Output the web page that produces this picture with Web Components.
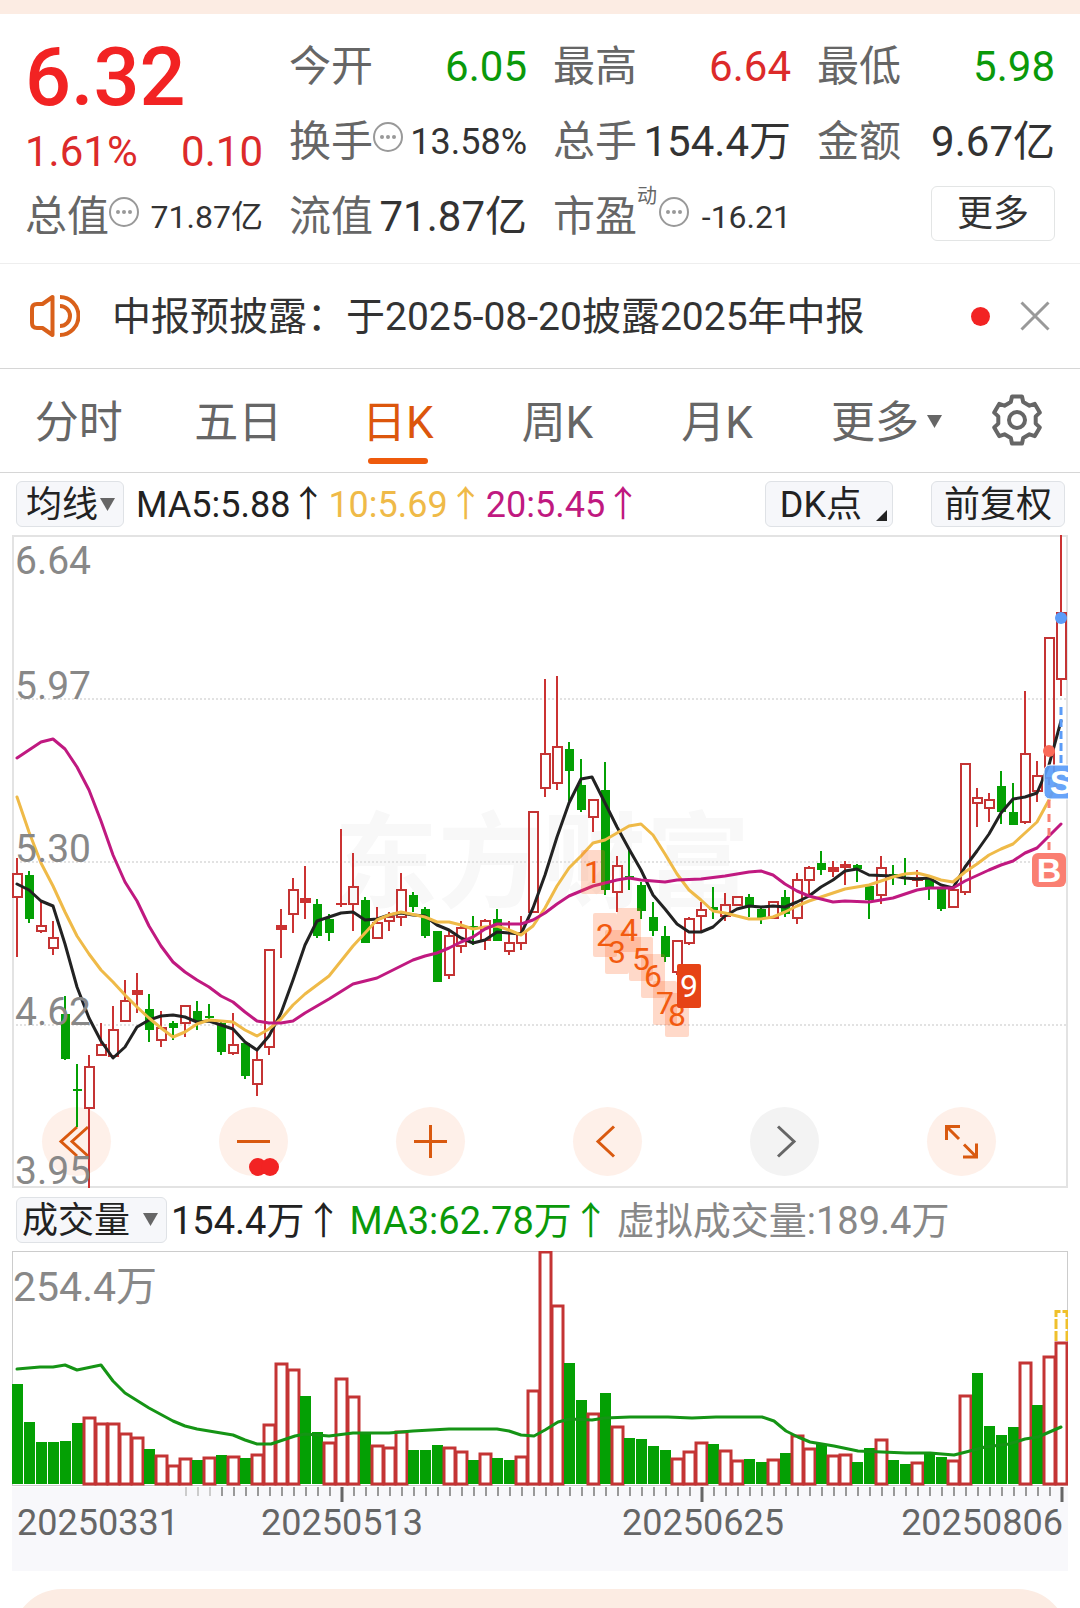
<!DOCTYPE html>
<html lang="zh-CN">
<head>
<meta charset="utf-8">
<meta name="viewport" content="width=device-width, initial-scale=1">
<title>日K</title>
<style>
	body {
		margin: 0;
		min-height: 100vh;
		display: flex;
		flex-direction: column;
		background: #fff;
		color: #333;
		font-family: Roboto, "Noto Sans CJK SC", sans-serif;
	}
</style>
</head>
<body>
<stock-app></stock-app>

<script>
'use strict';

function define(name, html, setup) {
	let template = document.createElement('template');
	template.innerHTML = html;

	customElements.define(name, class extends HTMLElement {
		constructor() {
			super();
			this.attachShadow({ mode: 'open' })
				.appendChild(template.content.cloneNode(true));
		}

		connectedCallback() {
			if(setup)
				setup(this, this.shadowRoot);
		}
	});
}

// one entry per trading day: colour, high, body top, body bottom, low
const CANDLES = `
r 858 873 898 957|g 871 875 919 923|r 902 925 932 933|r 921 937 949 955|g 996 1014 1059 1060
g 1064 1089 1091 1127|r 1055 1066 1109 1188|r 1023 1044 1056 1056|r 1006 1029 1057 1059|r 980 1000 1022 1022
r 973 990 995 1013|g 994 1009 1030 1042|r 1011 1027 1041 1047|g 1021 1023 1028 1040|r 1005 1005 1024 1037
g 1001 1011 1021 1030|g 1004 1016 1018 1022|g 1021 1023 1052 1055|r 1013 1044 1054 1055|g 1041 1043 1076 1079
r 1050 1059 1085 1096|r 949 949 1048 1055|r 909 925 930 958|r 878 889 915 933|r 866 898 903 919
g 899 904 936 938|g 914 919 933 941|r 829 903 905 907|r 853 886 905 931|g 897 900 943 943
r 907 922 939 939|r 912 916 922 931|r 873 889 918 926|g 892 895 907 912|g 907 909 936 938
g 931 931 982 982|r 931 935 976 979|r 921 927 947 953|g 916 926 928 945|r 919 920 941 950
g 909 919 941 941|r 921 942 952 955|r 916 932 944 950|r 811 811 913 913|r 679 753 789 797
r 676 746 784 790|g 742 749 771 801|g 759 785 810 812|r 799 799 818 832|g 762 790 890 895
r 856 865 893 912|g 848 876 878 890|g 882 885 911 919|g 902 917 931 936|g 926 936 957 962
r 940 940 973 975|r 917 918 944 945|r 902 909 917 932|g 887 907 910 919|r 893 904 917 921
r 896 896 906 906|g 894 897 907 917|g 908 909 918 924|r 901 901 919 919|g 890 897 914 917
r 873 879 919 924|r 866 867 881 894|g 851 863 870 875|r 861 867 872 877|r 861 864 868 885
g 864 865 869 882|g 886 886 900 919|r 856 867 896 904|g 865 874 876 885|g 858 877 879 885
r 870 877 881 887|g 879 879 889 900|g 889 889 909 911|r 889 889 908 908|r 763 763 893 895
r 788 797 804 827|r 793 799 809 822|g 771 786 812 824|g 783 812 825 825|r 691 753 823 824
r 761 775 792 802|r 637 637 779 785|r 535 612 680 696`
	.trim().split(/[|\n]/).map(row => {
		let [colour, ...v] = row.split(' ');
		return [colour, ...v.map(Number)];
	});

const VOLUMES = [
	1384, 1422, 1442, 1442, 1441, 1423, 1417, 1423, 1423, 1433, 1437, 1449, 1455, 1465, 1458, 1460,
	1457, 1455, 1456, 1458, 1454, 1424, 1363, 1369, 1396, 1432, 1442, 1378, 1396, 1432, 1445, 1447,
	1431, 1450, 1450, 1445, 1447, 1451, 1460, 1453, 1458, 1460, 1456, 1390, 1251, 1305, 1363, 1400,
	1413, 1393, 1426, 1438, 1439, 1446, 1450, 1458, 1451, 1442, 1444, 1450, 1460, 1459, 1462, 1459,
	1453, 1435, 1448, 1444, 1455, 1454, 1462, 1448, 1439, 1460, 1464, 1462, 1453, 1457, 1460, 1395,
	1373, 1426, 1435, 1427, 1362, 1405, 1356, 1342
];
const VOLUME_COLOURS = 'ggggggrrrrrgrrrgrgrgrrrrggrrrgrrrgggrrgrggrrrrggrgrggggrrrgrrggrgrrgrrggrggrggrrggggrgrr';

const MA5 = '17,884 29,890 41,901 53,906 65,944 77,987 89,1018 101,1041 113,1058 125,1047 137,1027 149,1020 161,1016 173,1015 185,1017 197,1022 209,1021 221,1025 233,1029 245,1042 257,1050 269,1036 281,1013 293,980 305,945 317,921 329,917 341,913 353,912 365,920 377,919 389,915 401,913 413,915 425,916 437,925 449,930 461,938 473,943 485,940 497,932 509,933 521,934 533,908 545,875 557,837 569,803 581,779 592,777 605,803 617,827 629,849 641,870 653,895 665,909 677,924 689,932 701,932 713,927 725,916 737,909 749,906 761,907 773,906 785,907 797,902 809,896 821,887 833,880 845,871 857,869 869,875 893,876 905,878 917,879 929,878 941,885 953,888 965,867 977,851 989,834 1001,813 1013,799 1025,797 1037,793 1049,765 1061,721';
const MA10 = '17,797 29,832 41,863 53,886 65,912 77,936 89,954 101,970 113,982 125,995 137,1007 149,1018 161,1028 173,1037 185,1032 197,1024 209,1020 233,1022 245,1030 257,1036 269,1029 281,1019 293,1005 305,994 329,976 353,946 377,920 389,915 401,912 425,917 437,922 449,922 461,925 473,929 485,927 497,926 509,930 521,935 533,926 545,908 557,886 569,868 581,856 593,843 605,840 617,833 629,826 641,824 653,835 665,854 677,874 689,890 701,900 713,911 725,913 737,916 749,919 761,919 773,917 785,912 797,906 809,901 833,893 845,889 857,887 869,885 881,881 893,877 905,874 917,873 929,876 941,880 953,882 965,872 977,864 989,855 1001,849 1013,844 1025,833 1037,822 1049,800 1061,772';
const MA20 = '17,758 41,742 53,739 65,749 77,767 89,790 101,821 113,855 125,882 137,901 149,926 161,946 173,962 185,972 197,980 209,987 221,996 233,1002 245,1012 257,1021 269,1023 281,1023 293,1021 305,1013 329,999 353,984 377,978 401,966 413,960 425,956 437,953 449,948 461,942 473,937 485,929 497,924 521,924 533,920 545,913 557,904 569,896 581,891 593,886 617,880 629,878 641,880 665,882 677,880 701,879 725,876 749,872 761,871 773,875 785,884 797,891 809,896 833,902 845,901 869,902 893,898 917,890 929,888 953,888 965,881 989,870 1001,865 1013,861 1025,853 1037,848 1049,836 1061,824';
const VOLUME_MA = '17,1369 40,1367 53,1367 65,1365 77,1370 101,1365 113,1381 125,1393 149,1408 173,1421 185,1426 197,1429 233,1435 245,1440 257,1444 271,1444 295,1436 305,1434 329,1436 353,1433 389,1433 413,1431 449,1429 497,1429 509,1431 521,1435 534,1436 545,1430 558,1422 570,1419 592,1420 605,1418 630,1417 668,1417 692,1418 716,1417 762,1417 774,1421 786,1431 798,1437 810,1442 834,1446 858,1451 882,1452 906,1453 930,1453 954,1455 966,1452 985,1447 1009,1444 1025,1439 1038,1437 1061,1427';

// nine-turn counter: day index, top of the mark
const COUNTS = [[48, 850], [49, 913], [50, 930], [51, 908], [52, 937], [53, 954], [54, 981], [55, 993], [56, 964]];

function candle([colour, high, top, bottom, low], i) {
	let x = 12 + i * 12;
	let height = bottom - top;
	if(colour == 'g')
		return `<path class="g" d="M${x + 4} ${high}h2V${low}h-2zM${x + 1} ${top}h9v${height}h-9z"/>`;
	if(height <= 5)
		return `<path class="r" d="M${x + 4} ${high}h2V${low}h-2zM${x} ${top}h11v${height}h-11z"/>`;
	return `<path class="r" d="M${x + 4} ${high}h2V${top}h-2zM${x + 4} ${bottom}h2V${low}h-2z"/>
		<rect class="hollow" x="${x + 1}" y="${top + 1}" width="9" height="${height - 2}"/>`;
}

function volume(top, i) {
	let x = 12 + i * 12;
	return VOLUME_COLOURS[i] == 'g'
		? `<rect class="g" x="${x}" y="${top}" width="11" height="${1484 - top}"/>`
		: `<rect class="hollow" x="${x}" y="${top + 1}" width="11" height="${1483 - top}"/>`;
}

function gear() {
	let points = [];
	for(let a = 0; a < 360; a += 60)
		for(let [r, d] of [[19, -19], [24, -12], [24, 12], [19, 19]]) {
			let t = (a + d) * Math.PI / 180;
			points.push((26 + r * Math.sin(t)).toFixed(1) + ',' + (26 - r * Math.cos(t)).toFixed(1));
		}
	return points.join(' ');
}

define('more-dots', `
	<style>
		:host { display: block; flex: none; width: 30px; height: 30px; padding-bottom: 10px; }
		svg { display: block; }
	</style>
	<svg width="30" height="30" viewBox="0 0 30 30" fill="#999">
		<circle cx="15" cy="15" r="14" fill="none" stroke="#999" stroke-width="2"/>
		<circle cx="9" cy="15" r="2"/><circle cx="15" cy="15" r="2"/><circle cx="21" cy="15" r="2"/>
	</svg>
`);

define('quote-cell', `
	<style>
		:host { display: flex; align-items: center; font-size: 42px; line-height: 52px; white-space: nowrap; }
		.label { color: #666; }
		.value { margin-left: auto; }
		sup { font-size: 20px; line-height: 24px; align-self: flex-start; margin-right: 2px; padding-top: 5px; color: #666; }
		:host([size=medium]) .value { font-size: 36px; }
		:host([size=small]) .value { font-size: 32px; }
		:host([trend=up]) .value { color: #dc2a2a; }
		:host([trend=down]) .value { color: #0a990a; }
	</style>
	<span class="label"></span><sup></sup><more-dots></more-dots>
	<span class="value"><slot></slot></span>
`, (el, root) => {
	root.querySelector('.label').textContent = el.getAttribute('label');
	if(!el.hasAttribute('info'))
		root.querySelector('more-dots').remove();
	if(el.hasAttribute('note'))
		root.querySelector('sup').textContent = el.getAttribute('note');
	else
		root.querySelector('sup').remove();
});

define('quote-panel', `
	<style>
		:host {
			display: grid;
			grid-template-columns: repeat(4, 1fr);
			grid-auto-rows: 75px;
			column-gap: 26px;
			padding: 15px 25px 9px;
			border-top: 14px solid #fcece3;
			border-bottom: 1px solid #eee;
		}
		.price { grid-row: span 2; }
		.price strong { display: block; font-size: 81px; line-height: 98px; font-weight: 500; color: #f22323; }
		.price div { display: flex; justify-content: space-between; font-size: 42px; line-height: 50px; color: #dc2a2a; }
		button {
			justify-self: end;
			align-self: center;
			width: 124px;
			height: 55px;
			margin-bottom: 6px;
			padding: 0;
			border: 1px solid #e3e5e5;
			border-radius: 6px;
			background: #fff;
			color: #333;
			font: inherit;
			font-size: 36px;
			line-height: 52px;
		}
	</style>
	<div class="price">
		<strong>6.32</strong>
		<div><span>1.61%</span><span>0.10</span></div>
	</div>
	<quote-cell label="今开" trend="down">6.05</quote-cell>
	<quote-cell label="最高" trend="up">6.64</quote-cell>
	<quote-cell label="最低" trend="down">5.98</quote-cell>
	<quote-cell label="换手" size="medium" info>13.58%</quote-cell>
	<quote-cell label="总手">154.4万</quote-cell>
	<quote-cell label="金额">9.67亿</quote-cell>
	<quote-cell label="总值" size="small" info>71.87亿</quote-cell>
	<quote-cell label="流值">71.87亿</quote-cell>
	<quote-cell label="市盈" note="动" size="small" info>-16.21</quote-cell>
	<button type="button">更多</button>
`);

define('notice-bar', `
	<style>
		:host {
			display: flex;
			align-items: center;
			min-height: 104px;
			padding: 0 30px;
			border-bottom: 1px solid #d6d6d6;
			font-size: 39px;
			line-height: 52px;
		}
		svg { display: block; flex: none; }
		a { flex: 1; margin-left: 32px; padding-top: 2px; color: #333; text-decoration: none; white-space: nowrap; }
		.dot { width: 19px; height: 19px; margin-right: 30px; border-radius: 50%; background: #f22323; }
		button { padding: 0; border: 0; background: none; }
	</style>
	<svg width="50" height="44" viewBox="0 0 50 44" fill="none" stroke="#d9601a" stroke-width="4">
		<path d="M22.5 3v38L12.500 34H7q-5 0-5-5V15Q2 10 7 10h5.500z" stroke-linejoin="round"/>
		<path d="M30 12a10 10 0 0 1 0 20M30 3a18.500 19 0 0 1 0 38"/>
	</svg>
	<a href="#notice"><slot></slot></a>
	<span class="dot"></span>
	<button type="button" aria-label="关闭">
		<svg width="30" height="30" viewBox="0 0 30 30" stroke="#999" stroke-width="3"><path d="M1.500 1.500l27 27M28.500 1.500l-27 27"/></svg>
	</button>
`);

define('period-tabs', `
	<style>
		:host {
			display: grid;
			grid-template-columns: repeat(6, 4fr) 3fr;
			height: 103px;
			padding-right: 3px;
			border-bottom: 1px solid #d6d6d6;
		}
		button {
			display: flex;
			flex-direction: column;
			align-items: center;
			padding: 28px 2px 0 0;
			border: 0;
			background: none;
			color: #666;
			font: inherit;
			font-size: 44px;
			line-height: 52px;
			white-space: nowrap;
		}
		button[aria-selected=true] { color: #dc560c; }
		button[aria-selected=true]::after {
			content: '';
			width: 60px;
			height: 6px;
			margin-top: 9px;
			border-radius: 3px;
			background: #ee5a0c;
		}
		.more { flex-direction: row; align-items: flex-start; justify-content: center; gap: 8px; padding-left: 20px; }
		.more svg { padding-top: 18px; }
		.set { padding: 25px 0 0; }
	</style>
	<button type="button" role="tab">分时</button>
	<button type="button" role="tab">五日</button>
	<button type="button" role="tab" aria-selected="true">日K</button>
	<button type="button" role="tab">周K</button>
	<button type="button" role="tab">月K</button>
	<button type="button" class="more" aria-haspopup="menu">更多<svg width="15" height="13" viewBox="0 0 15 13"><path d="M0 0h15L7.500 13z" fill="#666"/></svg></button>
	<button type="button" class="set" aria-label="设置">
		<svg width="52" height="52" viewBox="0 0 52 52" fill="none" stroke="#666" stroke-width="4">
			<polygon points="${gear()}" stroke-linejoin="round"/>
			<circle cx="26" cy="26" r="8"/>
		</svg>
	</button>
`);

define('chip-select', `
	<style>
		:host { display: inline-grid; align-items: center; }
		select, svg { grid-area: 1 / 1; }
		select {
			appearance: none;
			box-sizing: border-box;
			height: 46px;
			padding: 2px var(--chip-end, 24px) 0 var(--chip-start, 9px);
			border: 1px solid #dfe2e6;
			border-radius: 6px;
			background: #f6f7fa;
			color: #222;
			font: inherit;
			font-size: 36px;
			line-height: 42px;
		}
		svg { justify-self: end; margin-right: 9px; pointer-events: none; }
	</style>
	<select><option></option></select>
	<svg width="15" height="13" viewBox="0 0 15 13"><path d="M0 0h15L7.500 13z" fill="#666"/></svg>
`, (el, root) => {
	root.querySelector('select').setAttribute('aria-label', el.getAttribute('value'));
	root.querySelector('option').textContent = el.getAttribute('value');
});

define('chip-button', `
	<style>
		:host { display: block; }
		button {
			display: flex;
			align-items: flex-end;
			gap: 14px;
			height: 46px;
			padding: 2px 5px 0 14px;
			border: 1px solid #dfe2e6;
			border-radius: 6px;
			background: #f6f7fa;
			color: #222;
			font: inherit;
			font-size: 36px;
			line-height: 42px;
			white-space: nowrap;
		}
		svg { display: none; margin-bottom: 5px; }
		:host([corner]) svg { display: block; }
		:host(:not([corner])) button { padding: 2px 12px 0; }
	</style>
	<button type="button"><slot></slot><svg width="11" height="11" viewBox="0 0 11 11"><path d="M11 0v11H0z" fill="#222"/></svg></button>
`);

define('indicator-bar', `
	<style>
		:host { display: flex; align-items: center; min-height: 62px; padding: 0 15px 0 16px; white-space: nowrap; }
		.values { display: flex; flex: 1; font-size: 36px; line-height: 48px; gap: 2px; margin-left: 12px; padding-top: 2px; }
		:host([volume]) { min-height: 63px; }
		:host([volume]) .values { font-size: 38px; gap: 7px; margin-left: 4px; }
	</style>
	<slot name="menu"></slot>
	<div class="values"><slot></slot></div>
	<slot name="actions"></slot>
`);

define('round-button', `
	<style>
		:host { display: block; }
		button { display: block; width: 69px; height: 69px; padding: 0; border: 0; border-radius: 50%; background: #fef0e9; }
		svg { display: block; fill: none; stroke: #d9590f; stroke-width: 3; }
		:host([disabled]) button { background: #f3f3f3; }
		:host([disabled]) svg { stroke: #666; }
	</style>
	<button type="button"><svg width="69" height="69" viewBox="0 0 69 69"><path/></svg></button>
`, (el, root) => {
	const shapes = {
		first: 'M35 20L19 34.500L35 49M46 20L30 34.500L46 49',
		minus: 'M18 34.500h33',
		plus: 'M18 34.500h33M34.500 18v33',
		prev: 'M41 19.500L25 34.500L41 49.500',
		next: 'M28 19.500L44 34.500L28 49.500',
		expand: 'M19.500 33V19.500H33M19.500 19.500L32 32M36 50H49.500V36.500M49.500 50L37 37.500'
	};
	root.querySelector('path').setAttribute('d', shapes[el.getAttribute('icon')]);
	root.querySelector('button').setAttribute('aria-label', el.getAttribute('icon'));
});

const CHART_STYLE = `
	svg { display: block; width: 100%; height: auto; }
	text { font-family: Roboto, "Noto Sans CJK SC", sans-serif; }
	.r { fill: #cb3232; }
	.g { fill: #04a004; }
	.hollow { fill: #fff; stroke: #c43434; stroke-width: 2; }
	polyline { fill: none; stroke-width: 3; stroke-linejoin: round; stroke-linecap: round; }
`;

define('k-chart', `
	<style>
		${CHART_STYLE}
		:host { display: block; position: relative; margin: 0 12px; }
		.plot { position: relative; z-index: 1; overflow: visible; pointer-events: none; }
		.hollow { fill: none; }
		.grid { stroke: #e2e2e2; stroke-width: 2; stroke-dasharray: 2 2; }
		.price { font-size: 39px; fill: #888; }
		.mark { fill: rgba(255, 104, 40, .25); }
		.count { font-size: 32px; fill: #f25a0f; text-anchor: middle; }
		.water { font-size: 104px; font-weight: 700; fill: #f8f8f8; }
		.badge { font-family: "Liberation Sans", sans-serif; font-size: 34px; font-weight: 700; fill: #fff; text-anchor: middle; }
		nav {
			position: absolute;
			left: 30px;
			right: 72px;
			bottom: 12px;
			display: flex;
			justify-content: space-between;
		}
	</style>
	<nav>
		<round-button icon="first"></round-button>
		<round-button icon="minus"></round-button>
		<round-button icon="plus"></round-button>
		<round-button icon="prev"></round-button>
		<round-button icon="next" disabled></round-button>
		<round-button icon="expand"></round-button>
	</nav>
	<svg class="plot" viewBox="12 535 1056 653">
		<clipPath id="frame"><rect x="12" y="535" width="1056" height="653"/></clipPath>
		<text class="water" x="334" y="900">东方财富</text>
		<path class="grid" d="M12 699H1067M12 862H1067M12 1025H1067"/>
		<rect x="13" y="536" width="1054" height="651" fill="none" stroke="#e3e3e3" stroke-width="2"/>
		<g>${CANDLES.map(candle).join('')}</g>
		<polyline points="${MA5}" stroke="#222"/>
		<polyline points="${MA10}" stroke="#efba48"/>
		<polyline points="${MA20}" stroke="#c01980"/>
		<g class="price">
			<text x="15" y="574">6.64</text>
			<text x="15" y="699">5.97</text>
			<text x="15" y="862">5.30</text>
			<text x="15" y="1025">4.62</text>
			<text x="15" y="1184">3.95</text>
		</g>
		<g>${COUNTS.slice(0, 8).map(([i, y]) => `<rect class="mark" x="${i * 12 + 5}" y="${y}" width="24" height="44" rx="2"/>`).join('')}</g>
		<g>${COUNTS.slice(0, 8).map(([i, y], n) => `<text class="count" x="${i * 12 + 17}" y="${y + 33}">${n + 1}</text>`).join('')}</g>
		<rect x="677" y="964" width="24" height="44" rx="2" fill="#e64316"/>
		<text class="count" x="689" y="997" style="fill: #fff">9</text>
		<circle cx="258" cy="1167" r="9" fill="#f22323"/>
		<circle cx="270" cy="1167" r="9" fill="#f22323"/>
		<path d="M1061 707V766" stroke="#5b9cf8" stroke-width="3" stroke-dasharray="8 4"/>
		<path d="M1049 800V853" stroke="#fa7f72" stroke-width="3" stroke-dasharray="8 6"/>
		<circle cx="1061" cy="618" r="6" fill="#5b9cf8"/>
		<circle cx="1049" cy="751" r="6" fill="#fa6a58"/>
		<rect x="1032" y="853" width="34" height="34" rx="6" fill="#fa7f72"/>
		<text class="badge" x="1049" y="882">B</text>
		<g clip-path="url(#frame)">
			<rect x="1044" y="765" width="34" height="34" rx="6" fill="#5b9cf8" stroke="#fff" fill-opacity=".92"/>
			<text class="badge" x="1061" y="794">S</text>
		</g>
	</svg>
`);

define('volume-chart', `
	<style>
		${CHART_STYLE}
		:host { display: block; margin: 0 12px; }
		.hollow { stroke-width: 3; }
	</style>
	<svg viewBox="12 1251 1056 235">
		<rect x="12.500" y="1251.500" width="1055" height="234" fill="none" stroke="#ccc"/>
		<path d="M1056 1341V1311.500H1067V1341" fill="none" stroke="#efc02c" stroke-width="3" stroke-dasharray="10 2"/>
		<g>${VOLUMES.map(volume).join('')}</g>
		<polyline points="${VOLUME_MA}" stroke="#159415"/>
		<text x="13" y="1301" font-size="41" fill="#888">254.4万</text>
	</svg>
`);

define('time-axis', `
	<style>
		:host { display: block; margin: 1px 12px 18px; background: #f8f8fb; }
		svg { display: block; width: 100%; height: auto; }
		text { font-family: Roboto, sans-serif; font-size: 36px; fill: #666; }
	</style>
	<svg viewBox="12 1487 1056 84">
		<g stroke-width="2">${VOLUMES.map((v, i) => i < 14 ? '' : `<path d="M${18 + i * 12} 1487v9" stroke="${i < 17 ? '#ccc' : '#999'}"/>`).join('')}</g>
		<path d="M342 1487v15M702 1487v15M1062 1487v15" stroke="#666" stroke-width="3"/>
		<text x="17" y="1535">20250331</text>
		<text x="342" y="1535" text-anchor="middle">20250513</text>
		<text x="703" y="1535" text-anchor="middle">20250625</text>
		<text x="1063" y="1535" text-anchor="end">20250806</text>
	</svg>
`);

define('next-card', `
	<style>
		:host { display: block; flex: 1 0 0; min-height: 19px; overflow: hidden; margin: 0 12px; contain: size; }
		div { height: 120px; border-radius: 50px 50px 0 0; background: #fcece3; }
	</style>
	<div></div>
`);

define('stock-app', `
	<style>
		:host { display: flex; flex: 1; flex-direction: column; }
		.ma5 { color: #222; }
		.ma10 { color: #efba48; }
		.ma20 { color: #c01980; }
		.ma3 { color: #0a990a; }
		.virtual { color: #888; }
		.volume { --chip-start: 5px; --chip-end: 35px; }
		.actions { display: flex; gap: 38px; }
	</style>
	<quote-panel></quote-panel>
	<notice-bar>中报预披露：于2025-08-20披露2025年中报</notice-bar>
	<period-tabs></period-tabs>
	<indicator-bar>
		<chip-select slot="menu" value="均线"></chip-select>
		<span class="ma5">MA5:5.88↑</span>
		<span class="ma10">10:5.69↑</span>
		<span class="ma20">20:5.45↑</span>
		<div slot="actions" class="actions">
			<chip-button corner>DK点</chip-button>
			<chip-button>前复权</chip-button>
		</div>
	</indicator-bar>
	<k-chart></k-chart>
	<indicator-bar volume>
		<chip-select slot="menu" class="volume" value="成交量"></chip-select>
		<span class="ma5">154.4万↑</span>
		<span class="ma3">MA3:62.78万↑</span>
		<span class="virtual">虚拟成交量:189.4万</span>
	</indicator-bar>
	<volume-chart></volume-chart>
	<time-axis></time-axis>
	<next-card></next-card>
`);
</script>
</body>
</html>
